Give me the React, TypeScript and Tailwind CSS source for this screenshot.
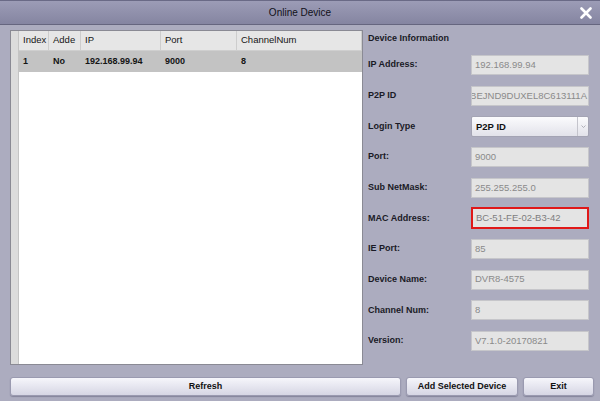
import React from "react"

const font = { fontFamily: '"Liberation Sans", Arial, sans-serif' }

const fields: { label: string; value: string; kind?: "select" | "mac" | "clip" }[] = [
  { label: "IP Address:", value: "192.168.99.94" },
  { label: "P2P ID", value: "BEJND9DUXEL8C613111A", kind: "clip" },
  { label: "Login Type", value: "P2P ID", kind: "select" },
  { label: "Port:", value: "9000" },
  { label: "Sub NetMask:", value: "255.255.255.0" },
  { label: "MAC Address:", value: "BC-51-FE-02-B3-42", kind: "mac" },
  { label: "IE Port:", value: "85" },
  { label: "Device Name:", value: "DVR8-4575" },
  { label: "Channel Num:", value: "8" },
  { label: "Version:", value: "V7.1.0-20170821" },
]

const columns = [
  { name: "Index", w: "w-[30px]" },
  { name: "Adde", w: "w-[32px]" },
  { name: "IP", w: "w-[80px]" },
  { name: "Port", w: "w-[76px]" },
  { name: "ChannelNum", w: "flex-1" },
]

const row = ["1", "No", "192.168.99.94", "9000", "8"]

function Field({ value, kind }: { value: string; kind?: string }) {
  if (kind === "select") {
    return (
      <div className="h-[21px] flex items-stretch border border-[#a4a4b4] rounded-[2px] bg-gradient-to-b from-[#fbfbfd] to-[#e2e2ea]">
        <span className="flex-1 flex items-center pl-[4px] text-[9.5px] font-bold text-[#111]">{value}</span>
        <span className="w-[11px] border-l border-[#c4c4cc] flex items-center justify-center">
          <svg width="5" height="3" viewBox="0 0 5 3">
            <path d="M0.5 0.5 L2.5 2.5 L4.5 0.5" fill="none" stroke="#a0a0aa" strokeWidth="0.8" />
          </svg>
        </span>
      </div>
    )
  }
  if (kind === "mac") {
    return (
      <div className="h-[22px] -mt-[1px] border-2 border-[#e01818] bg-[#e4e4e4] flex items-center pl-[3px] text-[9.5px] text-[#7e7e7e]">
        {value}
      </div>
    )
  }
  return (
    <div
      className={`h-[20px] border border-[#c6c6ca] bg-[#e4e4e4] flex items-center overflow-hidden whitespace-nowrap text-[9.5px] text-[#8a8a8a] ${
        kind === "clip" ? "justify-end pr-[1px]" : "pl-[3px]"
      }`}
    >
      {value}
    </div>
  )
}

export default function App() {
  return (
    <div className="w-[600px] h-[401px] bg-[#acacbf] flex flex-col overflow-hidden" style={font}>
      {/* Title bar */}
      <div className="h-[25px] shrink-0 relative flex items-center justify-center border-t border-[#6a6a86] border-b border-b-[#66667f] bg-gradient-to-b from-[#9c9cb6] to-[#8585a1]">
        <span className="text-[10px] text-[#101018]">Online Device</span>
        <svg className="absolute right-[8px] top-[6px]" width="12" height="12" viewBox="0 0 12 12">
          <path d="M1.5 1.5 L10.5 10.5 M10.5 1.5 L1.5 10.5" stroke="#ffffff" strokeWidth="2.6" strokeLinecap="round" />
        </svg>
      </div>

      <div className="flex flex-1 pl-[10px] pt-[5px]">
        {/* Device list */}
        <div className="w-[353px] h-[335px] border border-[#8a8a94] bg-white flex">
          <div className="w-[8px] bg-[#dcdcdc] border-r border-[#c4c4c4]" />
          <div className="flex-1 flex flex-col">
            <div className="h-[20px] flex bg-[#e6e6e6] border-b border-[#cfcfcf]">
              {columns.map((c) => (
                <div
                  key={c.name}
                  className={`${c.w} flex items-center pl-[4px] border-r border-[#cdcdcd] text-[9.5px] text-[#151515]`}
                >
                  {c.name}
                </div>
              ))}
            </div>
            <div className="h-[21px] flex bg-[#c3c3c3]">
              {row.map((v, i) => (
                <div
                  key={i}
                  className={`${columns[i].w} flex items-center pl-[4px] text-[9px] font-bold text-[#141414]`}
                >
                  {v}
                </div>
              ))}
            </div>
          </div>
        </div>

        {/* Device information */}
        <div className="flex-1 pl-[5px] pr-[11px]">
          <div className="h-[20px] flex items-center text-[9px] font-bold text-[#1a1a26] mt-[-1px]">Device Information</div>
          <div className="grid grid-cols-[103px_1fr] auto-rows-[20px] gap-y-[10.67px] mt-[6px]">
            {fields.map((f) => (
              <React.Fragment key={f.label}>
                <div className="flex items-center text-[9px] font-bold text-[#1a1a26]">{f.label}</div>
                <Field value={f.value} kind={f.kind} />
              </React.Fragment>
            ))}
          </div>
        </div>
      </div>

      {/* Buttons */}
      <div className="h-[19px] mb-[5px] flex pl-[10px] pr-[6px] gap-[4px]">
        {[
          { t: "Refresh", w: "flex-1" },
          { t: "Add Selected Device", w: "w-[112px] ml-[1px]" },
          { t: "Exit", w: "w-[71px] ml-[1px]" },
        ].map((b) => (
          <button
            key={b.t}
            className={`${b.w} h-full rounded-[3px] border border-[#9a9ab0] bg-gradient-to-b from-[#f6f6fb] to-[#d6d6e4] shadow-[0_1px_1px_rgba(60,60,90,0.35)] text-[9px] font-bold text-[#111]`}
          >
            {b.t}
          </button>
        ))}
      </div>
    </div>
  )
}
